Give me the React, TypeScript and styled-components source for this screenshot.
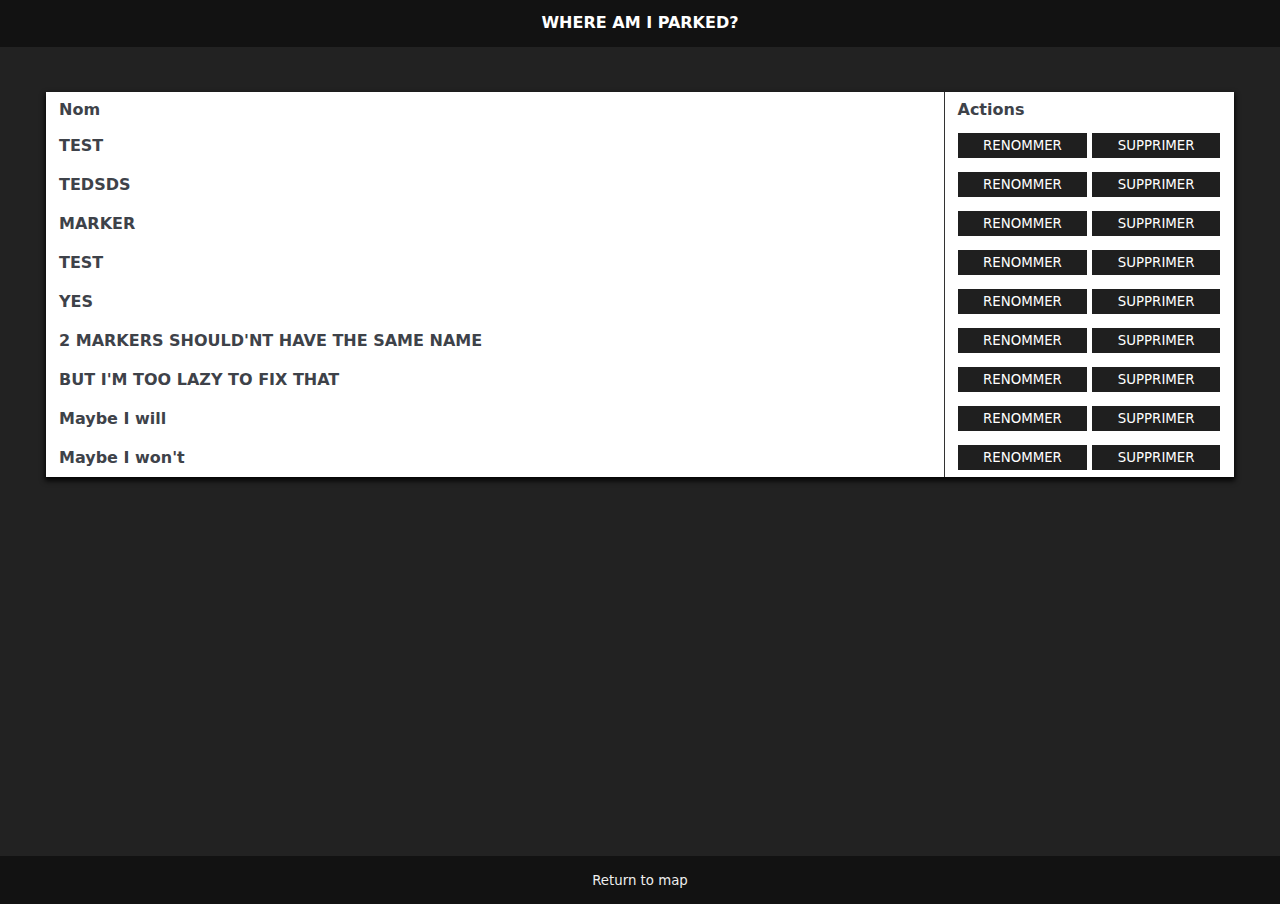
import React from "react";
import styled, { createGlobalStyle } from "styled-components";

const Global = createGlobalStyle`
  html, body { margin: 0; padding: 0; background: #222222; }
  body { font-family: "DejaVu Sans", sans-serif; }
  #root { min-height: 904px; }
`;

const Page = styled.div`
  display: flex;
  flex-direction: column;
  min-height: 904px;
  background: #222222;
`;

const TopBar = styled.header`
  height: 47px;
  background: #121212;
  display: flex;
  align-items: center;
  justify-content: center;
  color: #ffffff;
  font-weight: bold;
  font-size: 16px;
  padding-bottom: 2px;
  box-sizing: border-box;
`;

const Main = styled.main`
  flex: 1;
  padding: 45px 46px;
`;

const Table = styled.table`
  width: 100%;
  border-collapse: collapse;
  background: #ffffff;
  box-shadow: 0 3px 5px 1px rgba(0, 0, 0, 0.85);
  color: #3e4249;
`;

const HeadCell = styled.th<{ $actions?: boolean }>`
  text-align: left;
  font-size: 16px;
  font-weight: bold;
  height: 34px;
  padding: 0 13px;
  box-sizing: border-box;
  vertical-align: middle;
  border-left: ${(p) => (p.$actions ? "1px solid #333" : "none")};
  width: ${(p) => (p.$actions ? "290px" : "auto")};
`;

const NameCell = styled.td`
  font-size: 16px;
  font-weight: bold;
  padding: 0 13px;
  height: 39px;
  vertical-align: middle;
`;

const ActionCell = styled.td`
  border-left: 1px solid #333;
  padding: 7px 13px;
  vertical-align: middle;
`;

const Buttons = styled.div`
  display: flex;
  gap: 5px;
`;

const Button = styled.button`
  height: 25px;
  padding: 0 25.5px 1px;
  border: none;
  background: #1f1f1f;
  color: #ffffff;
  font-family: "DejaVu Sans", sans-serif;
  font-size: 13.333px;
  cursor: pointer;
  white-space: nowrap;
`;

const Footer = styled.footer`
  height: 48px;
  background: #121212;
  display: flex;
  align-items: center;
  justify-content: center;
  color: #eeeeee;
  font-size: 13.333px;
`;

const names = [
  "TEST",
  "TEDSDS",
  "MARKER",
  "TEST",
  "YES",
  "2 MARKERS SHOULD'NT HAVE THE SAME NAME",
  "BUT I'M TOO LAZY TO FIX THAT",
  "Maybe I will",
  "Maybe I won't",
];

export default function App() {
  return (
    <Page>
      <Global />
      <TopBar>WHERE AM I PARKED?</TopBar>
      <Main>
        <Table>
          <thead>
            <tr>
              <HeadCell>Nom</HeadCell>
              <HeadCell $actions>Actions</HeadCell>
            </tr>
          </thead>
          <tbody>
            {names.map((n, i) => (
              <tr key={i}>
                <NameCell>{n}</NameCell>
                <ActionCell>
                  <Buttons>
                    <Button>RENOMMER</Button>
                    <Button>SUPPRIMER</Button>
                  </Buttons>
                </ActionCell>
              </tr>
            ))}
          </tbody>
        </Table>
      </Main>
      <Footer>Return to map</Footer>
    </Page>
  );
}
